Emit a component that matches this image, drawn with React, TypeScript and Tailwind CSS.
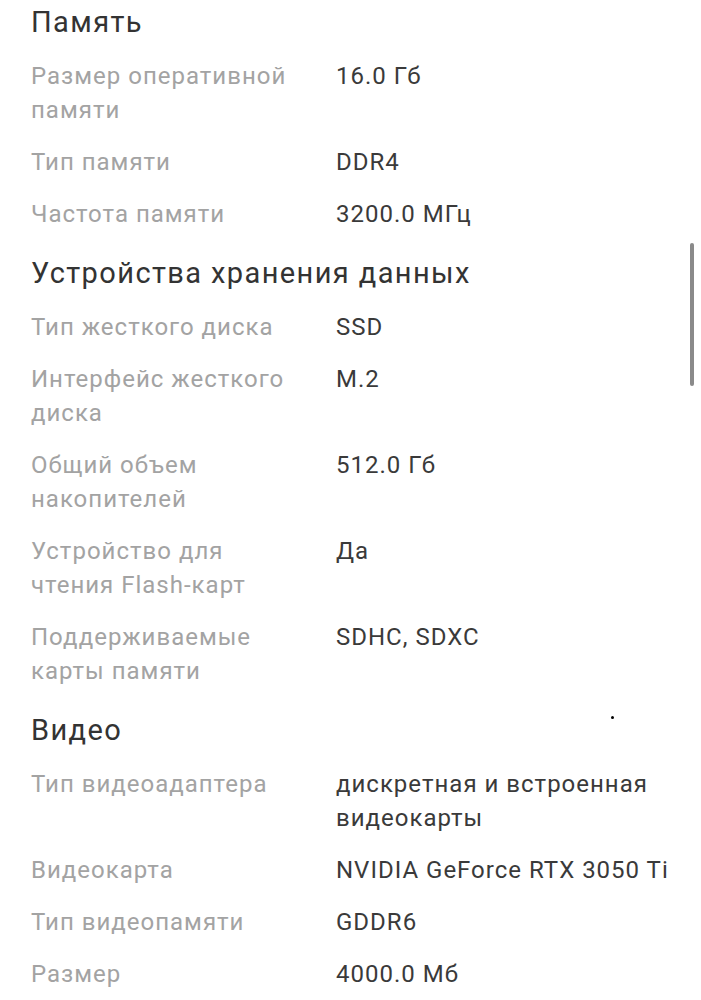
import React from "react";

type Row = [string, string];
const sections: { title: string; rows: Row[] }[] = [
  {
    title: "Память",
    rows: [
      ["Размер оперативной памяти", "16.0 Гб"],
      ["Тип памяти", "DDR4"],
      ["Частота памяти", "3200.0 МГц"],
    ],
  },
  {
    title: "Устройства хранения данных",
    rows: [
      ["Тип жесткого диска", "SSD"],
      ["Интерфейс жесткого диска", "M.2"],
      ["Общий объем накопителей", "512.0 Гб"],
      ["Устройство для чтения Flash-карт", "Да"],
      ["Поддерживаемые карты памяти", "SDHC, SDXC"],
    ],
  },
  {
    title: "Видео",
    rows: [
      ["Тип видеоадаптера", "дискретная и встроенная видеокарты"],
      ["Видеокарта", "NVIDIA GeForce RTX 3050 Ti"],
      ["Тип видеопамяти", "GDDR6"],
      ["Размер", "4000.0 Мб"],
    ],
  },
];

export default function App() {
  return (
    <div
      className="relative w-[701px] h-[1000px] overflow-hidden bg-white pl-[31px] pr-[20px] pt-[4px]"
      style={{ fontFamily: "Roboto, 'Noto Sans', sans-serif" }}
    >
      {sections.map((s, i) => (
        <div key={s.title} className={i === 0 ? "" : "mt-[24px]"}>
          <h2 className="text-[29px] leading-[36px] tracking-[1.4px] text-[#333333] mb-[19px]">{s.title}</h2>
          <div className="grid grid-cols-[270px_1fr] gap-x-[35px] gap-y-[18px]">
            {s.rows.map(([k, v]) => (
              <React.Fragment key={k}>
                <div className="text-[24px] leading-[34px] tracking-[1px] text-[#a3a3a3]">{k}</div>
                <div className="text-[24px] leading-[34px] tracking-[1px] text-[#3a3a3a]">{v}</div>
              </React.Fragment>
            ))}
          </div>
        </div>
      ))}
      <div className="absolute left-[690px] top-[243px] w-[4px] h-[143px] rounded-full bg-[#8a8a8a]" />
      <div className="absolute left-[611px] top-[716px] w-[3px] h-[3px] rounded-full bg-black" />
    </div>
  );
}
